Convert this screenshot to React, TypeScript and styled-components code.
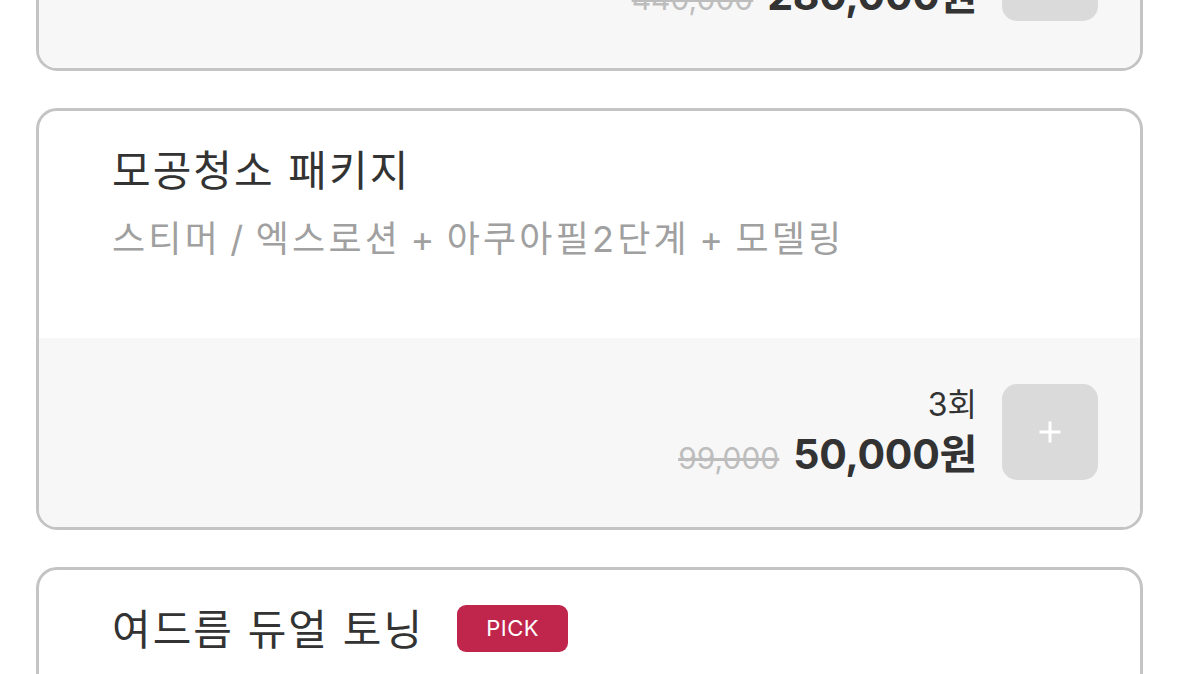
import React from "react";
import styled, { createGlobalStyle } from "styled-components";

const GlobalStyle = createGlobalStyle`
  html, body {
    margin: 0;
    padding: 0;
    background: #ffffff;
    overflow: hidden;
  }
  body {
    font-family: Inter, "Noto Sans CJK KR", "Noto Sans", sans-serif;
    color: #333333;
  }
  * { box-sizing: border-box; }
`;

const Page = styled.div`
  width: 1179px;
  height: 674px;
  overflow: hidden;
`;

const List = styled.div`
  display: flex;
  flex-direction: column;
  gap: 37px;
  padding: 0 36px;
  margin-top: -351px;
`;

const Card = styled.div`
  border: 3px solid #c4c4c4;
  border-radius: 21px;
  background: #ffffff;
  overflow: hidden;
  display: flex;
  flex-direction: column;
`;

const Body = styled.div`
  padding: 34px 73px 77px;
  display: flex;
  flex-direction: column;
  gap: 20px;
`;

const TitleRow = styled.div`
  display: flex;
  align-items: center;
  gap: 33px;
  height: 52px;
`;

const Title = styled.div`
  font-family: Inter, "Noto Sans CJK KR", sans-serif;
  font-size: 42px;
  line-height: 52px;
  font-weight: 400;
  color: #333333;
  letter-spacing: 2px;
`;

const Badge = styled.span`
  display: inline-flex;
  align-items: center;
  justify-content: center;
  width: 111px;
  height: 47px;
  margin-top: -4px;
  border-radius: 9px;
  background: #c0264b;
  color: #ffffff;
  font-family: Inter, "Noto Sans", sans-serif;
  font-size: 22px;
  font-weight: 400;
  letter-spacing: 0.5px;
`;

const Sub = styled.div`
  font-family: Inter, "Noto Sans CJK KR", sans-serif;
  font-size: 36px;
  line-height: 44px;
  color: #a0a0a0;
  letter-spacing: 3.2px;
  word-spacing: -4px;
  white-space: nowrap;
`;

const Footer = styled.div`
  background: #f7f7f7;
  padding: 46px 42px 47px;
  display: flex;
  justify-content: flex-end;
  align-items: center;
  gap: 25px;
`;

const PriceBlock = styled.div`
  display: flex;
  flex-direction: column;
  align-items: flex-end;
  gap: 4px;
`;

const Count = styled.div`
  font-family: Inter, "Noto Sans CJK KR", sans-serif;
  font-size: 32px;
  line-height: 40px;
  font-weight: 400;
  color: #333333;
`;

const PriceLine = styled.div`
  display: flex;
  align-items: baseline;
  gap: 14px;
`;

const OldPrice = styled.span`
  font-family: Inter, "Noto Sans", sans-serif;
  font-size: 30px;
  color: #bdbdbd;
  text-decoration: line-through;
  text-decoration-thickness: 3px;
`;

const Price = styled.span`
  font-family: Inter, "Noto Sans CJK KR", sans-serif;
  font-size: 41px;
  line-height: 50px;
  font-weight: 700;
  color: #333333;
  letter-spacing: -0.3px;
`;

const AddButton = styled.button`
  width: 96px;
  height: 96px;
  flex: none;
  border: none;
  border-radius: 15px;
  background: #dadada;
  display: flex;
  align-items: center;
  justify-content: center;
  padding: 0;
  cursor: pointer;
`;

const PlusIcon = () => (
  <svg width="22" height="22" viewBox="0 0 22 22" aria-hidden="true">
    <path d="M11 0.5V21.5M0.5 11H21.5" stroke="#ffffff" strokeWidth="3" />
  </svg>
);

type Item = {
  title: string;
  sub?: string;
  count?: string;
  oldPrice?: string;
  price?: string;
  pick?: boolean;
};

const items: Item[] = [
  {
    title: "여드름 압출 관리",
    sub: "스티머 / 압출 + 진정팩 + 모델링",
    count: "5회",
    oldPrice: "440,000",
    price: "280,000원",
  },
  {
    title: "모공청소 패키지",
    sub: "스티머 / 엑스로션 + 아쿠아필2단계 + 모델링",
    count: "3회",
    oldPrice: "99,000",
    price: "50,000원",
  },
  {
    title: "여드름 듀얼 토닝",
    sub: "레이저 토닝 + 진정 관리",
    count: "1회",
    oldPrice: "120,000",
    price: "69,000원",
    pick: true,
  },
];

export default function App() {
  return (
    <Page>
      <GlobalStyle />
      <List>
        {items.map((it) => (
          <Card key={it.title}>
            <Body>
              <TitleRow>
                <Title>{it.title}</Title>
                {it.pick && <Badge>PICK</Badge>}
              </TitleRow>
              <Sub>{it.sub}</Sub>
            </Body>
            <Footer>
              <PriceBlock>
                <Count>{it.count}</Count>
                <PriceLine>
                  <OldPrice>{it.oldPrice}</OldPrice>
                  <Price>{it.price}</Price>
                </PriceLine>
              </PriceBlock>
              <AddButton aria-label="추가">
                <PlusIcon />
              </AddButton>
            </Footer>
          </Card>
        ))}
      </List>
    </Page>
  );
}
